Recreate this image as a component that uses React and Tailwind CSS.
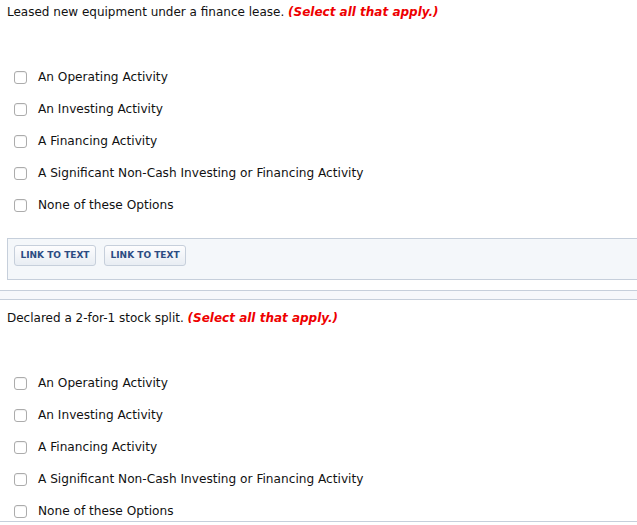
import React from "react";

const options = [
  "An Operating Activity",
  "An Investing Activity",
  "A Financing Activity",
  "A Significant Non-Cash Investing or Financing Activity",
  "None of these Options",
];

function Options() {
  return (
    <div className="mt-[46px] flex flex-col gap-[10px]">
      {options.map((o) => (
        <div key={o} className="flex h-[22px] items-center">
          <span className="ml-[14px] box-border h-[13px] w-[13px] rounded-[3px] border border-[#acacac] bg-white shadow-[inset_0_1px_1px_rgba(0,0,0,0.06)]" />
          <span className="ml-[11px] text-[12.15px] leading-4">{o}</span>
        </div>
      ))}
    </div>
  );
}

function Question({ text }) {
  return (
    <div className="pl-[7px] leading-4">
      {text}{" "}
      <span className="font-bold italic text-[#ee0000]">(Select all that apply.)</span>
    </div>
  );
}

function LinkButton() {
  return (
    <button className="box-border h-[21px] rounded-[3px] border border-[#c6cfdb] bg-gradient-to-b from-[#fdfdfe] to-[#e8edf3] px-[5.5px] text-[9px] font-bold leading-none text-[#2c4c82]">
      LINK TO TEXT
    </button>
  );
}

export default function App() {
  return (
    <div
      className="w-[637px] bg-white text-[12px] text-[#111]"
      style={{ fontFamily: '"DejaVu Sans", Verdana, sans-serif' }}
    >
      <div className="pt-[4px]">
        <Question text="Leased new equipment under a finance lease." />
        <Options />
      </div>
      <div className="ml-[7px] mt-[22px] box-border flex h-[42px] gap-[8px] border-y border-l border-[#c6cfdb] bg-[#f4f7fa] pl-[6px] pt-[6px]">
        <LinkButton />
        <LinkButton />
      </div>
      <div className="mt-[10px] box-border h-[10px] border-y border-[#c6cfdb] bg-[#f6f8fb]" />
      <div className="box-border border-b border-[#c6cfdb] pt-[10px]">
        <Question text="Declared a 2-for-1 stock split." />
        <div className="-mb-px">
          <Options />
        </div>
      </div>
    </div>
  );
}
